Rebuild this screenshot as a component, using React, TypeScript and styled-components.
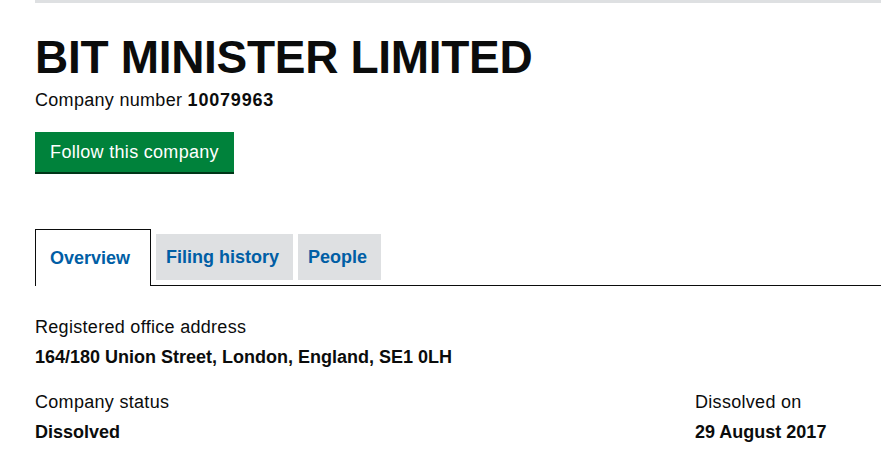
import React from 'react';
import styled, { createGlobalStyle } from 'styled-components';

const GlobalStyle = createGlobalStyle`
  html, body {
    margin: 0;
    padding: 0;
    background: #ffffff;
  }
  body {
    font-family: "Liberation Sans", Arial, sans-serif;
    color: #0b0c0c;
  }
`;

const Page = styled.main`
  padding: 0 0 0 35px;
  overflow: hidden;
`;

const TopRule = styled.div`
  height: 3px;
  background: #dee0e2;
`;

const Heading = styled.h1`
  margin: 28px 0 0;
  font-size: 46px;
  line-height: 52px;
  font-weight: 700;
  letter-spacing: -0.3px;
`;

const CompanyNumber = styled.p`
  margin: 6px 0 0;
  font-size: 18px;
  line-height: 22px;
  letter-spacing: 0.3px;

  strong {
    font-weight: 700;
    letter-spacing: 0.8px;
  }
`;

const FollowButton = styled.button`
  margin-top: 21px;
  display: block;
  width: 199px;
  height: 40px;
  padding: 0;
  border: none;
  background: #00823b;
  box-shadow: 0 2px 0 #003618;
  color: #ffffff;
  font-family: inherit;
  font-size: 18px;
  letter-spacing: 0.3px;
  text-align: center;
  cursor: pointer;
`;

const TabList = styled.ul`
  margin: 57px 0 0;
  padding: 0;
  list-style: none;
  display: flex;
  align-items: flex-end;
  gap: 5px;
  border-bottom: 1px solid #0b0c0c;
`;

const Tab = styled.li<{ $active?: boolean }>`
  box-sizing: border-box;
  height: ${p => (p.$active ? '57px' : '46px')};
  margin-bottom: ${p => (p.$active ? '-1px' : '5px')};
  padding: ${p => (p.$active ? '0 20px 0 14px' : '1px 14px 0 10px')};
  display: flex;
  align-items: center;
  background: ${p => (p.$active ? '#ffffff' : '#dee0e2')};
  border: ${p => (p.$active ? '1px solid #0b0c0c' : 'none')};
  border-bottom: none;
  color: #005ea5;
  font-size: 18px;
  font-weight: 700;
`;

const Details = styled.div`
  margin-top: 30px;
  display: flex;
  flex-direction: column;
  gap: 23px;
`;

const Row = styled.div`
  display: grid;
  grid-template-columns: 660px 1fr;
`;

const Field = styled.dl`
  margin: 0;
`;

const Label = styled.dt`
  font-size: 18px;
  line-height: 22px;
  letter-spacing: 0.3px;
`;

const Value = styled.dd`
  margin: 8px 0 0;
  font-size: 18px;
  line-height: 22px;
  font-weight: 700;
`;

export default function App() {
  return (
    <>
      <GlobalStyle />
      <Page>
        <TopRule />
        <Heading>BIT MINISTER LIMITED</Heading>
        <CompanyNumber>
          Company number <strong>10079963</strong>
        </CompanyNumber>
        <FollowButton>Follow this company</FollowButton>
        <TabList>
          <Tab $active>Overview</Tab>
          <Tab>Filing history</Tab>
          <Tab>People</Tab>
        </TabList>
        <Details>
          <Row>
            <Field>
              <Label>Registered office address</Label>
              <Value>164/180 Union Street, London, England, SE1 0LH</Value>
            </Field>
          </Row>
          <Row>
            <Field>
              <Label>Company status</Label>
              <Value>Dissolved</Value>
            </Field>
            <Field>
              <Label>Dissolved on</Label>
              <Value>29 August 2017</Value>
            </Field>
          </Row>
        </Details>
      </Page>
    </>
  );
}
